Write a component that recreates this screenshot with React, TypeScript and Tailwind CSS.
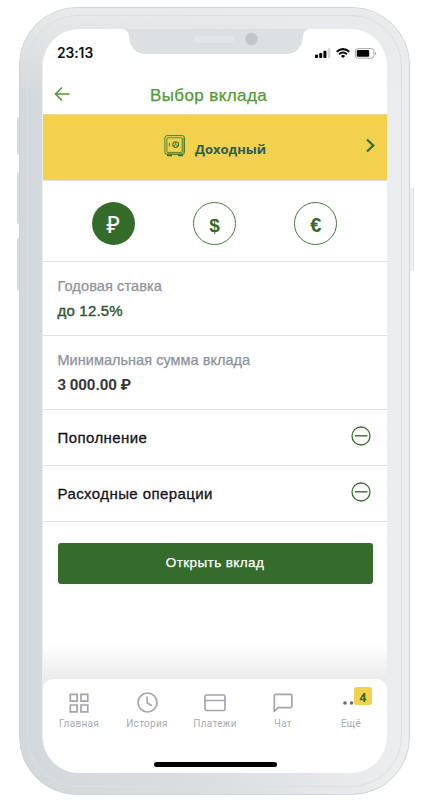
import React from "react";

const helv = "font-['Liberation_Sans',Arial,sans-serif]";

function StatusBar() {
  return (
    <div className="flex h-[45px] justify-between pl-[14px] pr-[10px] pt-[16px]">
      <span className="font-['Inter',sans-serif] text-[13.8px] font-semibold leading-[17px] tracking-[-0.05px] text-[#101216]">23:13</span>
      <div className="flex h-[16px] items-center">
        <svg width="16" height="10" viewBox="0 0 16 10">
          <rect x="0" y="6.5" width="3" height="3.5" rx="0.8" fill="#050505" />
          <rect x="4.2" y="5" width="3" height="5" rx="0.8" fill="#050505" />
          <rect x="8.4" y="2.7" width="3" height="7.3" rx="0.8" fill="#050505" />
          <rect x="12.6" y="0.3" width="2.8" height="9.7" rx="0.8" fill="#d4d5d7" />
        </svg>
        <svg className="ml-[5px]" width="14" height="10" viewBox="0 0 14 10" fill="none" stroke="#050505" strokeWidth="2">
          <path d="M.7 3.8Q7-1.6 13.3 3.8" />
          <path d="M3.1 6.2Q7 2.7 10.9 6.2" />
          <path d="M7 10 4.8 7.9Q7 6.3 9.2 7.9Z" fill="#050505" stroke="none" />
        </svg>
        <svg className="ml-[5px]" width="22" height="11" viewBox="0 0 22 11">
          <rect x="0.5" y="0.6" width="18.4" height="9.6" rx="2.4" fill="none" stroke="#aaa7ad" />
          <rect x="1.8" y="2" width="12.4" height="6.8" rx="1" fill="#050505" />
          <path d="M20 3.6Q22.2 5.4 20 7.2Z" fill="#aaa7ad" />
        </svg>
      </div>
    </div>
  );
}

function Safe() {
  return (
    <svg width="22" height="22" viewBox="0 0 22 22" fill="none" stroke="#3b7732">
      <rect x="0.9" y="0.6" width="19.6" height="19" rx="2.2" strokeWidth="0.9" />
      <path d="M19.2 2.6v15.6H2.6" stroke="#9ba342" strokeWidth="1.6" />
      <rect x="2.9" y="2.8" width="15.2" height="14.6" rx="0.8" strokeWidth="0.8" />
      <circle cx="11.7" cy="9.6" r="2.9" strokeWidth="1.1" />
      <path d="M11.7 9.6V7M11.7 9.6 9.4 11.1M11.7 9.6l2.3 1.5M5.3 8v3.4" strokeWidth="0.9" />
      <path d="M3 20.4h5M14 20.4h5" stroke="#28754a" strokeWidth="1.6" />
    </svg>
  );
}

function Minus() {
  return (
    <svg width="20" height="20" viewBox="0 0 20 20" fill="none" stroke="#35702b">
      <circle cx="10" cy="10" r="9" strokeWidth="1.3" />
      <path d="M3.8 9.8h12.6" strokeWidth="1.4" />
    </svg>
  );
}

function Row({ title }: { title: string }) {
  return (
    <div className="flex h-[56px] shrink-0 items-center justify-between border-b border-[#dfe1e3] pl-[14.5px] pr-[16px]">
      <span className={`${helv} text-[15px] leading-5 tracking-[0.42px] text-[#111318] [-webkit-text-stroke:0.3px_#111318]`}>{title}</span>
      <div className="-mt-1"><Minus /></div>
    </div>
  );
}

function Tab({ label, children }: { label: string; children: React.ReactNode }) {
  return (
    <div className="flex w-[68px] flex-col items-center">
      <div className="flex h-[22px] items-center justify-center">{children}</div>
      <span className="mt-[3px] font-['Roboto',sans-serif] text-[10px] leading-[14px] tracking-[0.3px] text-[#a8abb2]">{label}</span>
    </div>
  );
}

const ico = { fill: "none", stroke: "#a4a5ad", strokeWidth: 1.7, strokeLinejoin: "round" as const, strokeLinecap: "round" as const };

export default function App() {
  return (
    <div className="relative h-[800px] w-[428px] overflow-hidden bg-white pl-[19px] pt-[7px]">
      <div className="absolute left-[17px] top-[117px] h-[38px] w-[5px] rounded-l-[2px] bg-[#d8dcdf]" />
      <div className="absolute left-[17px] top-[172px] h-[52px] w-[5px] rounded-l-[2px] bg-[#d8dcdf]" />
      <div className="absolute left-[17px] top-[238px] h-[53px] w-[5px] rounded-l-[2px] bg-[#d8dcdf]" />
      <div className="absolute left-[407px] top-[188px] h-[83px] w-[7px] rounded-r-[2px] border-r border-[#dfe1e3] bg-[#edeff0]" />
      <div className="relative h-[788px] w-[391px] rounded-[58px] border border-[#d0d4d8] bg-linear-to-r from-[#d3d8dc] via-[#dbdfe2] to-[#edeef0] pl-[22px] pt-[21px]">
        <div className="absolute inset-x-0 top-0 h-[90px] rounded-t-[57px] bg-linear-to-b from-[#e8eaeb] to-transparent" />
        <div className="absolute inset-[7px] rounded-[51px] border border-[#dce0e2]" />
        <div className="relative flex h-[744px] w-[346px] flex-col overflow-hidden rounded-[37px] border-x border-[#e9edef] bg-white">
          <svg className="absolute left-[78.5px] top-0" width="188" height="26" viewBox="0 0 188 26">
            <path d="M0 0H188Q182 0 181 7C180 18 175 25 164 25H24C13 25 8 18 7 7Q6 0 0 0Z" fill="#dce0e3" />
            <rect x="72" y="6.5" width="40" height="7.5" rx="3.7" fill="#e3e6e8" />
            <circle cx="129.5" cy="10" r="6.2" fill="#c3c6c9" />
          </svg>
          <StatusBar />
          <div className="relative flex h-[40px] shrink-0 items-center justify-center pr-[13px] pt-[3px]">
            <svg className="absolute left-[11px] top-[12px]" width="16" height="16" viewBox="0 0 16 16" fill="none" stroke="#519b35" strokeWidth="1.7" strokeLinecap="round" strokeLinejoin="round">
              <path d="M15 8H1.5M7.5 2 1.5 8l6 6" />
            </svg>
            <span className={`${helv} text-[17px] leading-5 tracking-[0.4px] text-[#519b35] [-webkit-text-stroke:0.25px_#519b35]`}>Выбор вклада</span>
          </div>
          <div className="relative flex h-[66px] shrink-0 items-center border-t border-[#ecd783] bg-[#f1d14e] pl-[121px]">
            <div className="-mt-[3px]"><Safe /></div>
            <span className="ml-[9px] pt-[2px] font-['Open_Sans',sans-serif] text-[13px] font-bold leading-5 text-[#315b50]">Доходный</span>
            <svg className="absolute right-[12px] top-[23px]" width="9" height="15" viewBox="0 0 9 15" fill="none" stroke="#356f29" strokeWidth="2.3">
              <path d="M1 1.5 7.2 7.5 1 13.5" />
            </svg>
          </div>
          <div className="flex h-[82px] shrink-0 items-center gap-[58.3px] border-b border-t border-[#dfe1e3] pl-[48.8px] pt-[5px]">
            <div className="flex size-[43px] items-center justify-center rounded-full bg-[#356b29] pt-[2px] font-['Noto_Sans',sans-serif] text-[23px] leading-none text-white [-webkit-text-stroke:0.2px_white]">₽</div>
            <div className="flex size-[43px] items-center justify-center rounded-full border border-[#447a3b] pt-[3px] font-['Liberation_Sans',sans-serif] text-[19px] font-bold leading-none text-[#356b29]">$</div>
            <div className="flex size-[43px] items-center justify-center rounded-full border border-[#447a3b] pt-[3px] font-['Liberation_Sans',sans-serif] text-[20px] font-bold leading-none text-[#356b29]">€</div>
          </div>
          <div className="h-[74px] shrink-0 border-b border-[#dfe1e3] pl-[14.5px] pt-[14px]">
            <div className={`${helv} text-[14.5px] leading-5 tracking-[0.12px] text-[#8d9299] [-webkit-text-stroke:0.25px_#8d9299]`}>Годовая ставка</div>
            <div className={`${helv} mt-[5px] text-[15px] leading-5 tracking-[0.2px] text-[#315533] [-webkit-text-stroke:0.4px_#315533]`}>до 12.5%</div>
          </div>
          <div className="h-[74px] shrink-0 border-b border-[#dfe1e3] pl-[14.5px] pt-[14px]">
            <div className={`${helv} text-[14.5px] leading-5 tracking-[0.03px] text-[#8d9299] [-webkit-text-stroke:0.25px_#8d9299]`}>Минимальная сумма вклада</div>
            <div className="mt-[5px] font-['Roboto',sans-serif] text-[15px] font-bold leading-5 tracking-[-0.05px] text-[#35373c]">3 000.00 ₽</div>
          </div>
          <Row title="Пополнение" />
          <Row title="Расходные операции" />
          <div className="flex flex-1 flex-col bg-linear-to-b from-white from-78% to-[#ebebec] px-[14.5px] pt-[21px]">
            <button className={`${helv} h-[41px] w-full rounded-[3px] bg-[#356b2b] text-[13.5px] tracking-[0.4px] text-white [-webkit-text-stroke:0.25px_white]`}>Открыть вклад</button>
          </div>
          <div className="shrink-0 bg-[#ebebec]">
            <div className="flex h-[94.5px] flex-col rounded-t-[10px] bg-white">
              <div className="flex px-[2px] pt-[13px]">
                <Tab label="Главная">
                  <svg width="20" height="20" viewBox="0 0 20 20" {...ico} strokeLinejoin="miter"><path d="M1.3 1.3h6.8v6.8H1.3zM12 1.3h6.8v6.8H12zM1.3 12h6.8v6.8H1.3zM12 12h6.8v6.8H12z" /></svg>
                </Tab>
                <Tab label="История">
                  <svg width="21" height="21" viewBox="0 0 21 21" {...ico}><circle cx="10.5" cy="10.5" r="9.5" /><path d="M10.2 5v6l4 2.3" /></svg>
                </Tab>
                <Tab label="Платежи">
                  <svg width="22" height="18" viewBox="0 0 22 18" {...ico}><rect x="1" y="1" width="20" height="15.5" rx="1.5" /><path d="M1 6.5h20" /></svg>
                </Tab>
                <Tab label="Чат">
                  <svg width="20" height="20" viewBox="0 0 20 20" {...ico}><path d="M1.3 18.5V2.7Q1.3 1.3 2.7 1.3h14.8q1.4 0 1.4 1.4v10.6q0 1.4-1.4 1.4H5.1z" /></svg>
                </Tab>
                <Tab label="Ещё">
                  <div className="relative h-[20px] w-[20px]">
                    <svg width="20" height="20" viewBox="0 0 20 20" fill="#6c6c70"><circle cx="4" cy="10" r="1.8" /><circle cx="10.5" cy="10" r="1.8" /></svg>
                    <span className="absolute left-[13px] top-[-5.5px] flex h-[18px] w-[18px] items-center justify-center rounded-[3px] bg-[#f1d14e] pt-[4px] font-['Noto_Sans',sans-serif] text-[12px] font-bold leading-none text-[#356b29]">4</span>
                  </div>
                </Tab>
              </div>
              <div className="ml-[111px] mt-[31px] h-[5px] w-[123px] rounded-full bg-black" />
            </div>
          </div>
        </div>
      </div>
    </div>
  );
}
